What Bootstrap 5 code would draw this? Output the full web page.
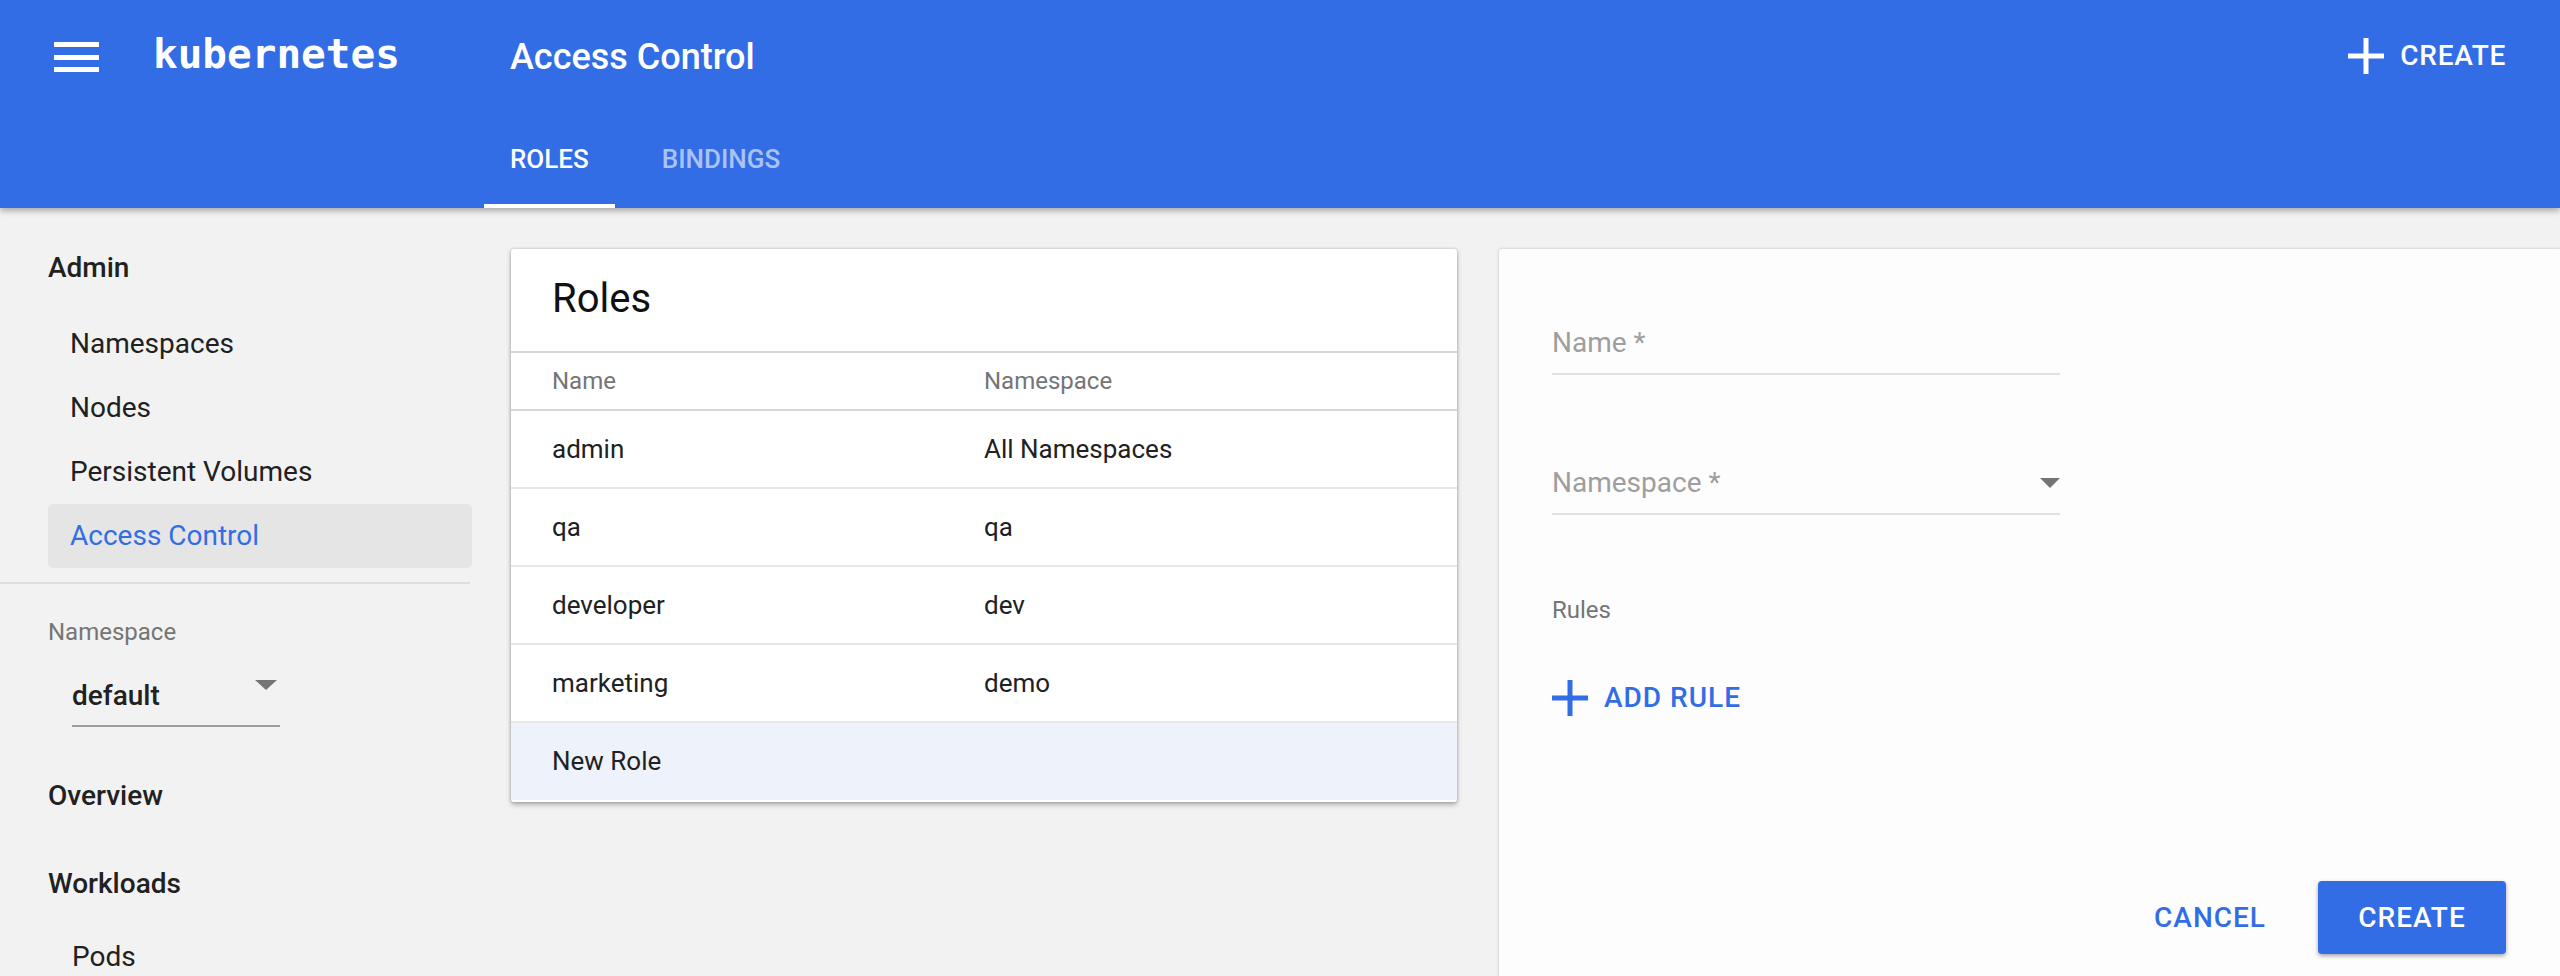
<!DOCTYPE html>
<html lang="en">
<head>
    <meta charset="UTF-8">
    <meta name="viewport" content="width=device-width, initial-scale=1.0">
    <title>Access Control</title>
    <link href="https://cdn.jsdelivr.net/npm/bootstrap@5.3.3/dist/css/bootstrap.min.css" rel="stylesheet">
    <style>
        html, body { height: 976px; overflow: hidden; }
        body { background: #f2f2f2; font-family: Roboto, "Liberation Sans", sans-serif; color: #212121; }

        /* top bar */
        .app-bar { height: 208px; background: #326de6; color: #fff; box-shadow: 0 3px 6px rgba(0,0,0,.3); position: relative; z-index: 2; }
        .bar-top { height: 128px; }
        .burger { width: 153px; padding-left: 54px; padding-top: 42px; }
        .burger span { display: block; width: 45px; height: 5px; background: #fff; margin-bottom: 7.5px; }
        .logo-text { width: 357px; padding-top: 30px; font-family: "DejaVu Sans Mono", monospace; font-size: 41px; line-height: 48px; font-weight: 700; }
        .bar-title { padding-top: 36px; font-size: 36px; line-height: 42px; font-weight: 500; }
        .bar-create { margin-left: auto; padding: 36px 54px 0 0; font-size: 28px; line-height: 40px; font-weight: 500; letter-spacing: .7px; }
        .tab-row { padding-left: 484px; height: 80px; }
        .tab-item { padding: 16px 26px 0; font-size: 26px; line-height: 30px; font-weight: 500; color: rgba(255,255,255,.6); height: 80px; }
        .tab-item.is-active { color: #fff; border-bottom: 4px solid #fff; }
        .tab-item + .tab-item { margin-left: 21px; }

        /* sidebar */
        .page-body { height: 768px; overflow: hidden; }
        .side-nav { width: 510px; flex: none; padding-top: 40px; font-size: 28px; }
        .side-head { padding-left: 48px; line-height: 40px; font-weight: 500; color: #212121; }
        .side-nav .nav-link { margin: 0 38px 0 48px; padding: 0 22px; height: 64px; line-height: 64px; color: #212121; border-radius: 5px; }
        .side-nav .nav-link.is-current { background: #e5e5e5; color: #326de6; }
        .side-list { margin-top: 24px; }
        .side-rule { width: 470px; height: 2px; background: #dedede; margin: 14px 0 0; }
        .ns-label { padding-left: 48px; margin-top: 34px; font-size: 24px; line-height: 28px; color: #757575; }
        .ns-pick { width: 208px; height: 53px; margin: 28px 0 0 72px; border-bottom: 2px solid #9e9e9e; font-weight: 500; line-height: 44px; }
        .ns-pick svg, .field-line svg { position: absolute; }
        .ns-pick svg { top: 6px; right: 3px; }
        .side-overview { margin-top: 49px; }
        .side-workloads { margin-top: 48px; }
        .side-pods { padding-left: 72px; margin-top: 33px; line-height: 40px; }

        /* roles list */
        .main-area { padding: 41px 0 0 1px; gap: 42px; }
        .roles-box { width: 946px; height: 553px; flex: none; border: 0; border-radius: 3px; background: #fff; box-shadow: 0 0 3px rgba(0,0,0,.25), 0 3px 5px rgba(0,0,0,.25); overflow: hidden; }
        .roles-title { height: 104px; padding: 28px 41px 0; font-size: 40px; line-height: 44px; color: #111; border-bottom: 2px solid #d6d6d6; }
        .roles-table { margin: 0; table-layout: fixed; --bs-table-bg: transparent; }
        .roles-table th, .roles-table td { padding: 0 41px; vertical-align: middle; font-size: 26px; border-bottom: 2px solid #e8e8e8; font-weight: 400; color: #212121; }
        .roles-table td { height: 78px; }
        .roles-table th { height: 57px; font-size: 24px; color: #757575; border-bottom-color: #d6d6d6; }
        .roles-table .col-name { width: 432px; }
        .roles-table tr:last-child td { border-bottom: 0; }
        .roles-table tr.row-new td { background: #eef2fb; }

        /* create form */
        .form-panel { flex: 1 1 auto; height: 800px; background: #fdfdfd; border-radius: 3px 0 0 0; box-shadow: 0 0 3px rgba(0,0,0,.25); padding: 0 54px 0 53px; display: flex; flex-direction: column; }
        .field-line { width: 508px; height: 48px; flex: none; border-bottom: 2px solid #e0e0e0; color: #9e9e9e; font-size: 28px; line-height: 32px; }
        .field-name { margin-top: 78px; }
        .field-ns { margin-top: 92px; }
        .field-line svg { right: 0; top: 11px; }
        .rules-label { margin-top: 81px; font-size: 24px; line-height: 28px; color: #757575; }
        .add-rule { margin-top: 56px; color: #326de6; font-size: 28px; line-height: 36px; font-weight: 500; letter-spacing: 1px; gap: 16px; }
        .form-actions { margin-top: 165px; gap: 52px; }
        .btn-flat { padding: 0; border: 0; color: #326de6; font-size: 28px; font-weight: 500; letter-spacing: 1px; }
        .btn-solid { width: 188px; height: 73px; padding: 0; border: 0; border-radius: 4px; background: #326de6; color: #fff; font-size: 28px; font-weight: 500; letter-spacing: 1px; box-shadow: 0 2px 4px rgba(0,0,0,.35); }
    </style>
</head>
<body>

<!-- top bar -->
<header class="app-bar">
    <div class="bar-top d-flex">
        <div class="burger"><span></span><span></span><span></span></div>
        <div class="logo-text">kubernetes</div>
        <div class="bar-title">Access Control</div>
        <div class="bar-create d-flex align-items-center align-self-start gap-3">
            <svg width="36" height="36" viewBox="0 0 36 36"><path d="M15.500 0h5v15.500h15.500v5h-15.500v15.500h-5v-15.500h-15.500v-5h15.500z" fill="#fff"/></svg>
            <span>CREATE</span>
        </div>
    </div>
    <div class="tab-row d-flex">
        <div class="tab-item is-active">ROLES</div>
        <div class="tab-item">BINDINGS</div>
    </div>
</header>

<div class="page-body d-flex">
    <!-- sidebar -->
    <aside class="side-nav">
        <div class="side-head">Admin</div>
        <nav class="nav flex-column side-list">
            <a class="nav-link" href="#">Namespaces</a>
            <a class="nav-link" href="#">Nodes</a>
            <a class="nav-link" href="#">Persistent Volumes</a>
            <a class="nav-link is-current" href="#">Access Control</a>
        </nav>
        <div class="side-rule"></div>
        <div class="ns-label">Namespace</div>
        <div class="ns-pick position-relative">default
            <svg width="22" height="10" viewBox="0 0 22 10"><path d="M0 0h22L11 10z" fill="#757575"/></svg>
        </div>
        <div class="side-head side-overview">Overview</div>
        <div class="side-head side-workloads">Workloads</div>
        <div class="side-pods">Pods</div>
    </aside>

    <main class="main-area d-flex flex-grow-1">
        <!-- roles list -->
        <div class="card roles-box">
            <div class="roles-title">Roles</div>
            <table class="table roles-table">
                <thead>
                    <tr><th class="col-name">Name</th><th>Namespace</th></tr>
                </thead>
                <tbody>
                    <tr><td>admin</td><td>All Namespaces</td></tr>
                    <tr><td>qa</td><td>qa</td></tr>
                    <tr><td>developer</td><td>dev</td></tr>
                    <tr><td>marketing</td><td>demo</td></tr>
                    <tr class="row-new"><td>New Role</td><td></td></tr>
                </tbody>
            </table>
        </div>

        <!-- create form -->
        <section class="form-panel">
            <div class="field-line field-name">Name *</div>
            <div class="field-line field-ns position-relative">Namespace *
                <svg width="20" height="10" viewBox="0 0 20 10"><path d="M0 0h20L10 10z" fill="#757575"/></svg>
            </div>
            <div class="rules-label">Rules</div>
            <div class="add-rule d-flex align-items-center">
                <svg width="36" height="36" viewBox="0 0 36 36"><path d="M15.500 0h5v15.500h15.500v5h-15.500v15.500h-5v-15.500h-15.500v-5h15.500z" fill="#326de6"/></svg>
                <span>ADD RULE</span>
            </div>
            <div class="form-actions d-flex justify-content-end align-items-center">
                <button type="button" class="btn btn-flat">CANCEL</button>
                <button type="button" class="btn btn-solid">CREATE</button>
            </div>
        </section>
    </main>
</div>

<script src="https://cdn.jsdelivr.net/npm/bootstrap@5.3.3/dist/js/bootstrap.bundle.min.js"></script>
</body>
</html>
